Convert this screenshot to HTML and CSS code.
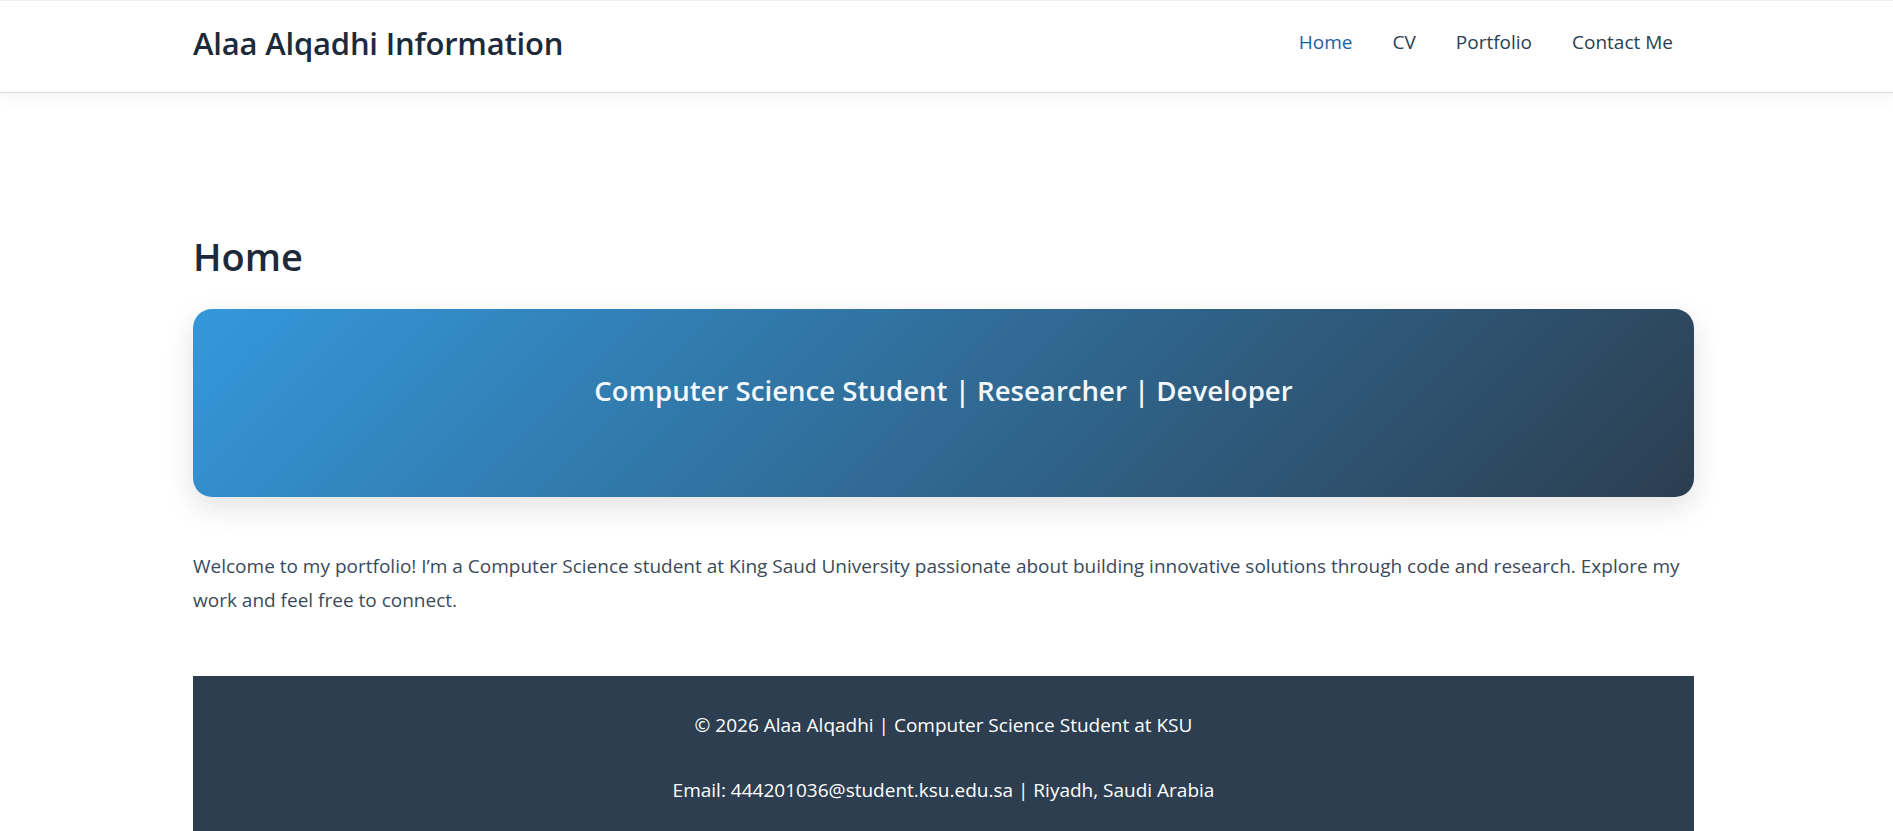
FILE: index.html
```html
<!DOCTYPE html>
<html lang="en">
<head>
<meta charset="utf-8">
<title>Alaa Alqadhi Information</title>
<link rel="stylesheet" href="styles.css">
</head>
<body>
<header class="site-header">
  <div class="header-inner">
    <div class="brand">Alaa Alqadhi Information</div>
    <nav class="nav">
      <a class="nav-link active" href="#">Home</a>
      <a class="nav-link" href="#">CV</a>
      <a class="nav-link" href="#">Portfolio</a>
      <a class="nav-link" href="#">Contact Me</a>
    </nav>
  </div>
</header>
<main class="main">
  <h1 class="page-title">Home</h1>
  <section class="hero">
    <h2 class="hero-text">Computer Science Student | Researcher | Developer</h2>
  </section>
  <p class="intro">Welcome to my portfolio! I’m a Computer Science student at King Saud University passionate about building innovative solutions through code and research. Explore my work and feel free to connect.</p>
  <footer class="footer">
    <p class="footer-line">© 2026 Alaa Alqadhi | Computer Science Student at KSU</p>
    <p class="footer-line">Email: 444201036@student.ksu.edu.sa | Riyadh, Saudi Arabia</p>
  </footer>
</main>
</body>
</html>
```

FILE: styles.css
```css
* { box-sizing: border-box; }

html, body {
  margin: 0;
  padding: 0;
  background: #ffffff;
  font-family: "Open Sans", "Noto Sans", sans-serif;
  color: #2c3e50;
}

body {
  overflow: hidden;
  height: 831px;
}

.site-header {
  background: #ffffff;
  border-top: 1px solid #f0f0f0;
  border-bottom: 1px solid #d9d9d9;
  box-shadow: 0 4px 18px rgba(0, 0, 0, 0.05);
  position: relative;
  z-index: 2;
}

.header-inner {
  width: 1501px;
  margin-left: 193px;
  height: 91px;
  padding-right: 21px;
  padding-bottom: 8px;
  display: flex;
  align-items: center;
  justify-content: space-between;
}

.brand {
  font-size: 31px;
  font-weight: 600;
  color: #1c2a3a;
  letter-spacing: -0.2px;
}

.nav {
  display: flex;
  gap: 40px;
  margin-bottom: 2px;
}

.nav-link {
  font-size: 19px;
  color: #2c3e50;
  text-decoration: none;
}

.nav-link.active {
  color: #21609f;
}

.main {
  width: 1501px;
  margin-left: 193px;
  padding-top: 141px;
}

.page-title {
  margin: 0 0 29px;
  font-size: 38px;
  line-height: 1.2;
  font-weight: 600;
  color: #1c2a3a;
}

.hero {
  height: 188px;
  border-radius: 19px;
  background: linear-gradient(135deg, #3498db 0%, #2c3e50 100%);
  box-shadow: 0 10px 30px rgba(0, 0, 0, 0.12);
  display: flex;
  align-items: center;
  justify-content: center;
  padding-bottom: 25px;
}

.hero-text {
  margin: 0;
  font-size: 27.6px;
  font-weight: 600;
  color: #f3f8fc;
}

.intro {
  margin: 52px 0 0;
  font-size: 19px;
  line-height: 34px;
  color: #3b4a5b;
}

.footer {
  margin-top: 59px;
  background: #2c3e50;
  padding: 32px 0 24px;
  text-align: center;
}

.footer-line {
  margin: 0;
  font-size: 19px;
  line-height: 34px;
  color: #ffffff;
}

.footer-line + .footer-line {
  margin-top: 31px;
}
```
